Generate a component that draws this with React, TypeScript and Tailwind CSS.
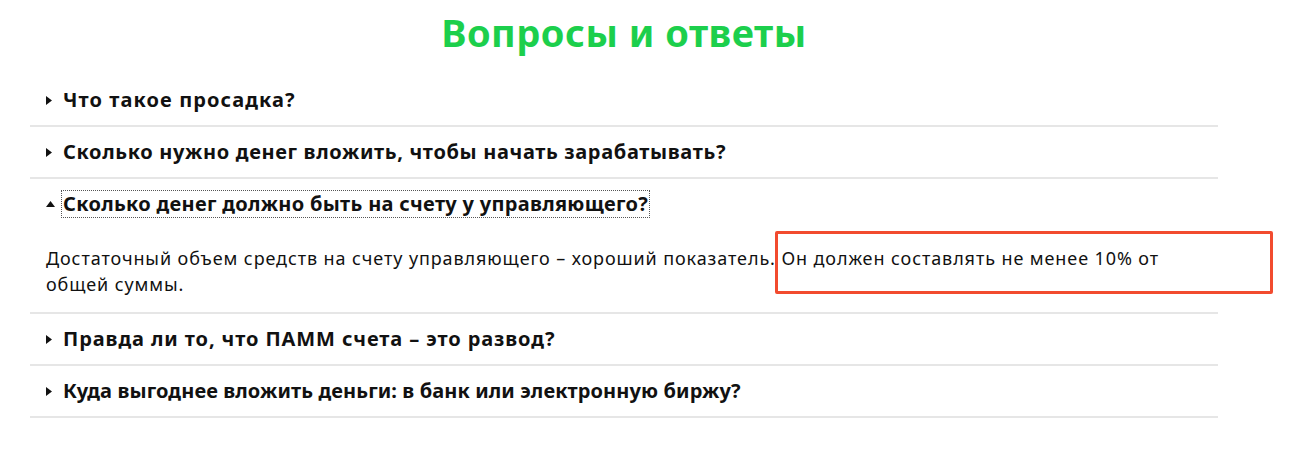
import React from "react";

const font = { fontFamily: '"Noto Sans", "Open Sans", sans-serif' };

function Arrow({ open }: { open?: boolean }) {
  return open ? (
    <svg width="9" height="6" viewBox="0 0 9 6" className="shrink-0">
      <path d="M0 6 L4.5 0 L9 6 Z" fill="#111" />
    </svg>
  ) : (
    <svg width="6" height="9" viewBox="0 0 6 9" className="shrink-0">
      <path d="M0 0 L6 4.5 L0 9 Z" fill="#111" />
    </svg>
  );
}

type Q = { text: string; track: string };

const questions: Q[] = [
  { text: "Что такое просадка?", track: "tracking-[1.1px]" },
  { text: "Сколько нужно денег вложить, чтобы начать зарабатывать?", track: "tracking-[0.65px]" },
];

const tail: Q[] = [
  { text: "Правда ли то, что ПАММ счета – это развод?", track: "tracking-[0.9px]" },
  { text: "Куда выгоднее вложить деньги: в банк или электронную биржу?", track: "tracking-[0.1px]" },
];

function Row({ q }: { q: Q }) {
  return (
    <div className="h-[52px] border-b-2 border-[#e6e6e6] flex items-center pl-[16px] gap-[11px]">
      <Arrow />
      <span className={`text-[20px] font-bold text-[#111] ${q.track}`}>{q.text}</span>
    </div>
  );
}

export default function App() {
  return (
    <div className="w-[1290px] h-[453px] bg-white relative overflow-hidden" style={font}>
      <div className="ml-[30px] w-[1188px]">
        <h2 className="h-[75px] pt-[8px] text-center text-[38px] font-bold text-[#1ccf4c] leading-[48px] tracking-[0.5px]">
          Вопросы и ответы
        </h2>
        {questions.map((q) => (
          <Row key={q.text} q={q} />
        ))}
        <div className="border-b-2 border-[#e6e6e6]">
          <div className="h-[50px] flex items-center pl-[16px] gap-[8px]">
            <Arrow open />
            <span className="text-[20px] font-bold text-[#111] tracking-[0.3px] outline-1 outline-dotted outline-[#555] outline-offset-[1px] leading-[24px]">
              Сколько денег должно быть на счету у управляющего?
            </span>
          </div>
          <p className="pl-[16px] pr-[16px] pt-[16px] pb-[15px] text-[18px] leading-[26px] tracking-[0.9px] text-[#111]">
            Достаточный объем средств на счету управляющего – хороший показатель. Он должен составлять не менее 10% от общей суммы.
          </p>
        </div>
        {tail.map((q) => (
          <Row key={q.text} q={q} />
        ))}
      </div>
      <div className="absolute left-[775px] top-[231px] w-[498px] h-[63px] border-[3px] border-[#f24b2f] rounded-[2px]" />
    </div>
  );
}
